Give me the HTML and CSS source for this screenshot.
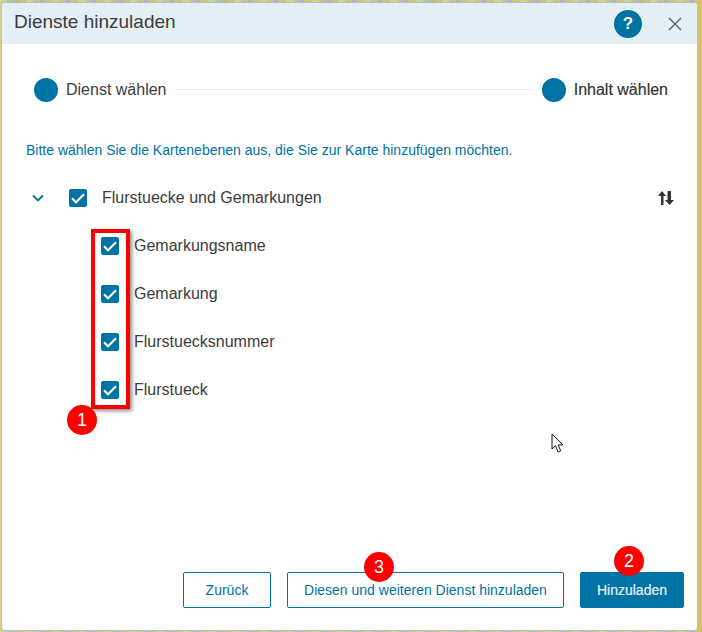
FILE: index.html
```html
<!DOCTYPE html>
<html lang="de">
<head>
<meta charset="utf-8">
<title>Dienste hinzuladen</title>
<link rel="stylesheet" href="styles.css">
</head>
<body>
<div class="dialog">
  <header class="head">
    <h1 class="title">Dienste hinzuladen</h1>
    <span class="help">?</span>
    <svg class="close" width="14" height="14" viewBox="0 0 14 14"><path d="M1 1l12 12M13 1L1 13" stroke="#555" stroke-width="1.2" fill="none"/></svg>
  </header>
  <div class="steps">
    <span class="dot"></span>
    <span class="step">Dienst wählen</span>
    <span class="line"></span>
    <span class="dot"></span>
    <span class="step active">Inhalt wählen</span>
  </div>
  <main class="content">
    <p class="hint">Bitte wählen Sie die Kartenebenen aus, die Sie zur Karte hinzufügen möchten.</p>
    <div class="row parent">
      <svg class="chevron" width="12" height="8" viewBox="0 0 12 8"><path d="M1 1.500l5 5 5-5" stroke="#0073a5" stroke-width="1.800" fill="none"/></svg>
      <span class="cb"><svg width="18" height="18" viewBox="0 0 18 18"><path d="M3 9.300l4 3.900L15 5.200" stroke="#fff" stroke-width="2.200" fill="none"/></svg></span>
      <span class="label">Flurstuecke und Gemarkungen</span>
      <svg class="sort" width="17" height="14" viewBox="0 0 17 14"><path d="M4 14V5H1l4-5 4 5H6.500v9zM10.500 0v9H8l4.500 5 4.500-5h-3V0z" fill="#333"/></svg>
    </div>
    <div class="row child">
      <span class="cb"><svg width="18" height="18" viewBox="0 0 18 18"><path d="M3 9.300l4 3.900L15 5.200" stroke="#fff" stroke-width="2.200" fill="none"/></svg></span>
      <span class="label">Gemarkungsname</span>
    </div>
    <div class="row child">
      <span class="cb"><svg width="18" height="18" viewBox="0 0 18 18"><path d="M3 9.300l4 3.900L15 5.200" stroke="#fff" stroke-width="2.200" fill="none"/></svg></span>
      <span class="label">Gemarkung</span>
    </div>
    <div class="row child">
      <span class="cb"><svg width="18" height="18" viewBox="0 0 18 18"><path d="M3 9.300l4 3.900L15 5.200" stroke="#fff" stroke-width="2.200" fill="none"/></svg></span>
      <span class="label">Flurstuecksnummer</span>
    </div>
    <div class="row child">
      <span class="cb"><svg width="18" height="18" viewBox="0 0 18 18"><path d="M3 9.300l4 3.900L15 5.200" stroke="#fff" stroke-width="2.200" fill="none"/></svg></span>
      <span class="label">Flurstueck</span>
    </div>
  </main>
  <footer class="foot">
    <button class="btn back">Zurück</button>
    <button class="btn more">Diesen und weiteren Dienst hinzuladen</button>
    <button class="btn primary">Hinzuladen</button>
  </footer>
</div>
<div class="mark"></div>
<span class="badge b1">1</span>
<span class="badge b2">2</span>
<span class="badge b3">3</span>
<svg class="cursor" width="14" height="21" viewBox="0 0 14 21"><path d="M1 1v15l3.500-3.300 2.600 6.300 2.600-1.100-2.600-6H12z" fill="#fff" stroke="#111" stroke-width="1"/></svg>
</body>
</html>
```
FILE: styles.css
```css
* { box-sizing: border-box; }
html, body { margin: 0; height: 632px; overflow: hidden; }
body {
  position: relative;
  padding: 2px 4px 1px 1px;
  font-family: "Liberation Sans", Arial, sans-serif;
  color: #3c3c3c;
  background: repeating-linear-gradient(90deg, #d9cf8f 0 7px, #b9c98a 7px 14px, #c9a8c8 14px 18px, #d8c070 18px 26px);
}
.dialog {
  height: 629px;
  display: flex;
  flex-direction: column;
  background: #fff;
  border: 1px solid #9fc9da;
  border-radius: 4px;
  overflow: hidden;
}
.head {
  height: 41px;
  flex: none;
  display: flex;
  align-items: center;
  padding: 0 15px 0 12px;
  background: #e4f0f5;
}
.title { margin: 0 0 3px; flex: 1; font-size: 19px; font-weight: 400; }
.help {
  width: 28px;
  height: 28px;
  border-radius: 50%;
  background: #0073a5;
  color: #fff;
  font-weight: 700;
  font-size: 17px;
  line-height: 28px;
  text-align: center;
}
.close { margin-left: 26px; }
.steps {
  display: flex;
  align-items: center;
  height: 24px;
  margin-top: 34px;
  padding: 0 29px 0 32px;
}
.dot { width: 24px; height: 24px; flex: none; border-radius: 50%; background: #0073a5; }
.step { margin-left: 8px; font-size: 16px; white-space: nowrap; }
.step.active { color: #333; -webkit-text-stroke: .2px #333; }
.line { flex: 1; height: 1px; margin: 0 9px 1px; background: #ebebeb; }
.content { flex: 1; padding: 0 23px 0 24px; }
.hint { margin: 40px 0 0; height: 17px; font-size: 14px; line-height: 17px; color: #0073a5; }
.row { display: flex; align-items: center; height: 48px; font-size: 16px; }
.parent { margin-top: 15px; }
.chevron { margin: 0 25px 0 6px; }
.cb {
  width: 18px;
  height: 18px;
  flex: none;
  border-radius: 2px;
  background: #0073a5;
}
.cb svg { display: block; }
.label { margin-left: 15px; }
.parent .label { flex: 1; }
.child { padding-left: 75px; }
.foot {
  display: flex;
  justify-content: flex-end;
  gap: 16px;
  padding: 0 13px 22px 0;
}
.btn {
  height: 36px;
  border: 1px solid #0073a5;
  border-radius: 2px;
  background: #fff;
  color: #0073a5;
  font: 14px "Liberation Sans", Arial, sans-serif;
}
.back { width: 88px; }
.more { width: 277px; }
.primary { width: 104px; background: #0073a5; color: #e8f3f8; -webkit-text-stroke: .2px #e8f3f8; }
.mark {
  position: absolute;
  left: 91px;
  top: 229px;
  width: 39px;
  height: 180px;
  border: 4px solid #f00;
  box-shadow: 2px 2px 4px rgba(0,0,0,.45);
}
.badge {
  position: absolute;
  width: 30px;
  height: 30px;
  border-radius: 50%;
  background: #f00;
  color: #fff;
  font-size: 18px;
  line-height: 30px;
  text-align: center;
}
.b1 { left: 67px; top: 405px; }
.b2 { left: 614px; top: 546px; }
.b3 { left: 364px; top: 552px; }
.cursor { position: absolute; left: 551px; top: 433px; }
```
